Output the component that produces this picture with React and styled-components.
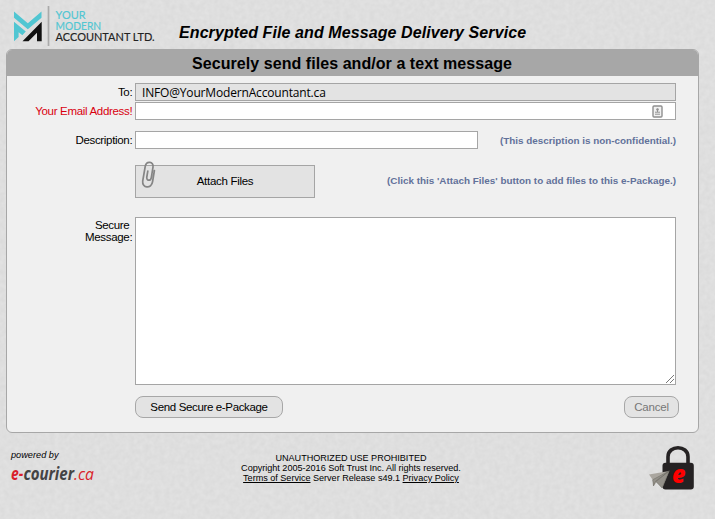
import React from "react";
import styled, { createGlobalStyle } from "styled-components";

const GlobalStyle = createGlobalStyle`
  * { box-sizing: border-box; }
  body {
    margin: 0;
    overflow: hidden;
    background: #dedede;
    font-family: "Liberation Sans", Arial, sans-serif;
    font-size: 11px;
    color: #000;
  }
`;

const Page = styled.div`
  position: relative;
  isolation: isolate;
  width: 715px;
  height: 519px;
  overflow: hidden;
`;

const Texture = styled.svg`
  position: absolute;
  inset: 0;
  z-index: -1;
`;

const Header = styled.header`
  display: flex;
  height: 49px;
  padding-left: 12px;
`;

const Title = styled.h1`
  margin: 23px 0 0 22px;
  font-size: 16px;
  line-height: 20px;
  font-style: italic;
  font-weight: bold;
  letter-spacing: 0.09px;
  white-space: nowrap;
`;

const Panel = styled.form`
  width: 693px;
  height: 384px;
  margin-left: 6px;
  border: 1px solid #a7a7a7;
  border-radius: 6px;
  background: #f0f0f0;
  overflow: hidden;
`;

const PanelHeading = styled.h2`
  height: 26px;
  margin: 0 0 7px;
  padding-right: 1px;
  background: #a7a7a7;
  font-size: 16px;
  line-height: 27px;
  letter-spacing: 0.06px;
  text-align: center;
`;

const Row = styled.div`
  display: flex;
  width: 669px;
  margin-bottom: ${(p) => p.$gap}px;
`;

const Label = styled.label`
  width: 128px;
  padding: ${(p) => p.$top ?? 3}px 2.7px 0 0;
  flex: none;
  font-size: 11.5px;
  line-height: 12px;
  letter-spacing: -0.32px;
  text-align: right;
  white-space: pre-line;
  color: ${(p) => (p.$alert ? "#d9000f" : "#000")};
`;

const Field = styled.div`
  display: flex;
  align-items: center;
  width: ${(p) => p.$width ?? 541}px;
  height: 18px;
  border: 1px solid #a5a5a5;
  background: ${(p) => (p.$locked ? "#e3e3e3" : "#fff")};
  padding: 0 12px 0 6px;
  justify-content: ${(p) => (p.$end ? "flex-end" : "flex-start")};
`;

const Recipient = styled.span`
  font-family: "Open Sans", "Noto Sans", sans-serif;
  font-size: 12px;
  line-height: 16px;
  letter-spacing: -0.17px;
  padding-top: 1px;
`;

const Hint = styled.span`
  margin-left: auto;
  align-self: center;
  font-size: 9.9px;
  font-weight: bold;
  color: #62719a;
  white-space: nowrap;
  padding-bottom: ${(p) => p.$lift ?? 0}px;
`;

const AttachButton = styled.button`
  position: relative;
  width: 180px;
  height: 33px;
  padding: 0 0 1px;
  border: 1px solid #a5a5a5;
  background: #e3e3e3;
  font: 11.5px "Liberation Sans", Arial, sans-serif;
  letter-spacing: -0.3px;
`;

const Clip = styled.svg`
  position: absolute;
  left: 5px;
  top: -6px;
`;

const MessageBox = styled.div`
  display: flex;
  align-items: flex-end;
  justify-content: flex-end;
  width: 541px;
  height: 168px;
  border: 1px solid #a5a5a5;
  background: #fff;
`;

const Actions = styled.div`
  display: flex;
  justify-content: space-between;
  width: 544px;
  margin-left: 128px;
`;

const ActionButton = styled.button`
  width: ${(p) => p.$width}px;
  height: 22px;
  padding: 0;
  border: 1px solid #a7a7a7;
  border-radius: 8px;
  background: #e3e3e3;
  font: 11.5px "Liberation Sans", Arial, sans-serif;
  letter-spacing: ${(p) => (p.$muted ? -0.2 : -0.35)}px;
  color: ${(p) => (p.$muted ? "#777" : "#000")};
`;

const Footer = styled.footer`
  display: grid;
  grid-template-columns: 162px 1fr 162px;
  height: 70px;
  width: 702px;
`;

const Powered = styled.div`
  padding: 16px 0 0 11px;
  font-size: 9.2px;
  line-height: 12px;
  font-style: italic;
  svg { display: block; overflow: visible; margin-top: 4px; }
`;

const Legal = styled.div`
  padding-top: 20px;
  font-size: 9.1px;
  line-height: 10px;
  letter-spacing: -0.02px;
  text-align: center;
  white-space: nowrap;
`;

const Link = styled.a`
  text-decoration: underline;
`;

const Secure = styled.div`
  display: flex;
  justify-content: flex-end;
  padding: 11px 6px 0 0;
`;

const BrandLogo = () => (
  <svg width="145" height="48" viewBox="12 0 145 48">
    <path d="M14 11.5 27.8 23.2 41.5 11.5V17.7L27.8 29.3 14 17.7Z" fill="#51c6d2" />
    <path d="M14 21.8 25.8 31.6 22.4 35.2 18.6 32.2V37L14 41.2Z" fill="#51c6d2" />
    <path d="M22.5 41.2 41.7 21.8V41.2H37V32.8L28.5 41.2Z" fill="#111" />
    <path d="M48.5 6V46" stroke="#aaa" strokeWidth="1.7" />
    <g fontFamily="Lato, sans-serif" fontSize="10.6" strokeWidth=".15">
      <text x="55.6" y="18.6" textLength="30" lengthAdjust="spacingAndGlyphs" fill="#51c6d2" stroke="#51c6d2">YOUR</text>
      <text x="55.6" y="29.7" textLength="45.5" lengthAdjust="spacingAndGlyphs" fill="#51c6d2" stroke="#51c6d2">MODERN</text>
      <text x="55.6" y="40.9" textLength="99" lengthAdjust="spacingAndGlyphs" fill="#222" stroke="#222">ACCOUNTANT LTD.</text>
    </g>
  </svg>
);

const ContactIcon = () => (
  <svg width="11" height="13" viewBox="0 0 11 13">
    <rect x="1" y="1" width="9" height="11" rx="1" fill="#f1f1f1" stroke="#8f8f8f" strokeWidth="1.4" />
    <circle cx="5.5" cy="4.4" r="1.2" fill="#858585" />
    <path d="M5.5 4v3M3 7.2h5M3 9.2h5" stroke="#919191" />
  </svg>
);

const ClipIcon = () => (
  <Clip width="18" height="30" viewBox="0 0 18 30" fill="none" stroke="#858585" strokeWidth="1.7" strokeLinecap="round">
    <path d="M13.4 10.5 11.6 21.5C10.5 29.3 .8 28.3 1.7 21L4.2 6.5C5.3 .4 13 1.5 12 7.2L10.3 17.6C9.6 21.5 5.2 20.8 5.8 17L6.8 11.2" />
  </Clip>
);

const ResizeGrip = () => (
  <svg width="10" height="10" viewBox="0 0 10 10" stroke="#555" strokeWidth=".8">
    <path d="M1 9 9 1M5 9 9 5" />
  </svg>
);

const CourierLogo = () => (
  <svg width="90" height="20" viewBox="11 -1 90 20" fontFamily="Open Sans, sans-serif" fontStyle="italic" fontSize="17">
    <text x="11" y="14" fill="#d91f2b" fontWeight="700" textLength="12.2" lengthAdjust="spacingAndGlyphs">e-</text>
    <text x="23.4" y="14" fill="#444" fontWeight="700" textLength="50.6" lengthAdjust="spacingAndGlyphs">courier</text>
    <text x="74" y="14" fill="#d91f2b" textLength="20" lengthAdjust="spacingAndGlyphs">.ca</text>
  </svg>
);

const LockLogo = () => (
  <svg width="48" height="46" viewBox="648 444 48 46">
    <path d="M668 465V456.8C668 444.7 688 444.7 688 456.8V465" fill="none" stroke="#252223" strokeWidth="3.6" />
    <rect x="662.5" y="462.8" width="31.3" height="26.7" rx="3" fill="#252223" />
    <path d="M649 474.6 669.2 470.9 662.2 488 656.5 482.2 653.5 486 652.7 479.8Z" fill="#aaa69f" />
    <path d="M669.2 470.9 652.7 479.8 653.5 486 655.5 481.3ZM669.2 470.9 656 481.6 662.2 488Z" fill="#94918a" stroke="#68665f" strokeWidth=".5" />
    <text x="672" y="482.6" fontFamily="Open Sans, sans-serif" fontStyle="italic" fontWeight="800" fontSize="24" fill="#f00" textLength="13.5" lengthAdjust="spacingAndGlyphs">e</text>
  </svg>
);

export default function App() {
  return (
    <Page>
      <GlobalStyle />
      <Texture width="715" height="519" aria-hidden="true">
        <filter id="paper" x="0" y="0" width="100%" height="100%" colorInterpolationFilters="sRGB">
          <feTurbulence type="fractalNoise" baseFrequency=".2" numOctaves="2" seed="4" />
          <feColorMatrix values=".045 0 0 0 .85  .045 0 0 0 .85  .045 0 0 0 .85  0 0 0 0 1" />
        </filter>
        <rect width="715" height="519" filter="url(#paper)" />
      </Texture>
      <Header>
        <BrandLogo />
        <Title>Encrypted File and Message Delivery Service</Title>
      </Header>
      <Panel>
        <PanelHeading>Securely send files and/or a text message</PanelHeading>
        <Row $gap={1}>
          <Label>To:</Label>
          <Field $locked><Recipient>INFO@YourModernAccountant.ca</Recipient></Field>
        </Row>
        <Row $gap={11}>
          <Label $alert>Your Email Address!</Label>
          <Field $end><ContactIcon /></Field>
        </Row>
        <Row $gap={16}>
          <Label>Description:</Label>
          <Field $width={343} />
          <Hint>(This description is non-confidential.)</Hint>
        </Row>
        <Row $gap={19}>
          <Label />
          <AttachButton type="button"><ClipIcon />Attach Files</AttachButton>
          <Hint $lift={2}>(Click this 'Attach Files' button to add files to this e-Package.)</Hint>
        </Row>
        <Row $gap={11}>
          <Label $top={2}>{"Secure\u00a0\nMessage:"}</Label>
          <MessageBox><ResizeGrip /></MessageBox>
        </Row>
        <Actions>
          <ActionButton type="button" $width={148}>Send Secure e-Package</ActionButton>
          <ActionButton type="button" $width={55} $muted>Cancel</ActionButton>
        </Actions>
      </Panel>
      <Footer>
        <Powered>powered by<CourierLogo /></Powered>
        <Legal>
          <div>UNAUTHORIZED USE PROHIBITED</div>
          <div>Copyright 2005-2016 Soft Trust Inc. All rights reserved.</div>
          <div><Link>Terms of Service</Link> Server Release s49.1 <Link>Privacy Policy</Link></div>
        </Legal>
        <Secure><LockLogo /></Secure>
      </Footer>
    </Page>
  );
}
